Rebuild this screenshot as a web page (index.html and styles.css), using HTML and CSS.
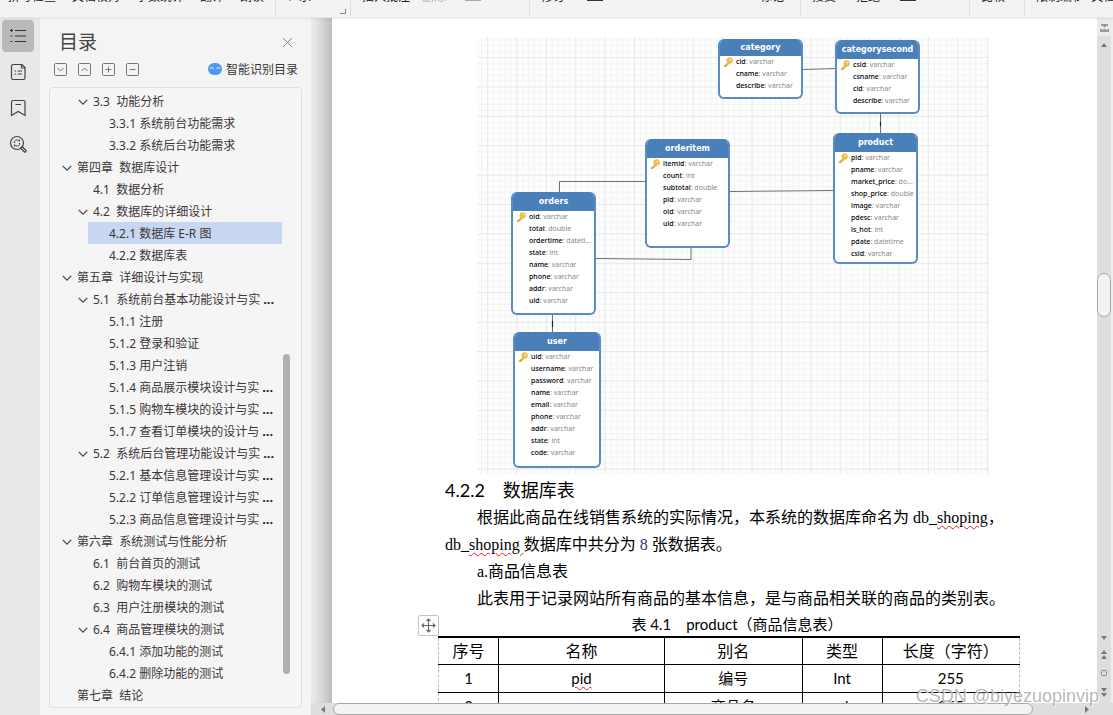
FILE: index.html
```html
<!DOCTYPE html>
<html lang="zh-CN">
<head>
<meta charset="utf-8">
<title>数据库设计</title>
<link rel="stylesheet" href="styles.css">
</head>
<body>
<svg class="defs" aria-hidden="true">
  <symbol id="chev" viewBox="0 0 10 10"><path d="M.7 2.8 5 7.2l4.300-4.400" fill="none" stroke="#444" stroke-width="1.200"/></symbol>
  <symbol id="key" viewBox="0 0 10 10"><path d="M5 5.500 1 8.800v1.100h2l.3-1 1-.2.300-1 1.800-1z" fill="#e6b23c" stroke="#cf9a33" stroke-width=".4"/><circle cx="6.700" cy="3.400" r="2.900" fill="#f5c445" stroke="#dca339" stroke-width=".5"/><circle cx="7.700" cy="2.400" r=".7" fill="#fff"/></symbol>
</svg>
<header class="ribbon">
  <div class="group g1"><span>拼写检查</span><span>文档校对</span><span>字数统计</span><span>翻译</span><span>朗读</span></div>
  <div class="group g2"><b class="blue">ノ</b><span>氷</span></div>
  <svg class="launcher" viewBox="0 0 6 6"><path d="M0 5.500h5.500V1" fill="none" stroke="#888"/></svg>
  <div class="group g3"><span>插入批注</span><span class="dim">删除</span><i class="bar pale"></i></div>
  <div class="group g4"><span>修订</span><i class="bar"></i><span class="end">标记</span></div>
  <div class="group g5"><span>接受</span><span>拒绝</span><i class="bar"></i></div>
  <div class="group g6"><span>比较</span></div>
  <div class="group g7"><span>限制编辑</span><span>文档</span></div>
</header>
<div class="work">
  <nav class="rail" aria-label="导航">
    <button class="on" aria-label="目录"><svg viewBox="0 0 18 18"><path d="M1 3.500h3M2.500 2v3M6 3.500h11M1.500 9h2M6 9h11M1.500 14.500h2M6 14.500h11" fill="none" stroke="#333" stroke-width="1.200"/></svg></button>
    <button aria-label="章节"><svg viewBox="0 0 18 18"><path d="M4 1.500h9l3 3v10.500a1.500 1.500 0 0 1-1.500 1.500h-10.500a1.500 1.500 0 0 1-1.500-1.500v-12A1.500 1.500 0 0 1 4 1.500zM12.500 1.500v3.500H16M5.500 8h1.500M8.500 8h4.500M5.500 11h1.500M8.500 11h4.500" fill="none" stroke="#444" stroke-width="1.200"/></svg></button>
    <button aria-label="书签"><svg viewBox="0 0 18 18"><path d="M4 1.500h10.500a1.500 1.500 0 0 1 1.500 1.500v13.500l-6.800-4-6.700 4V3A1.500 1.500 0 0 1 4 1.500zM6.500 5.500h5.500" fill="none" stroke="#444" stroke-width="1.200"/></svg></button>
    <button aria-label="查找"><svg viewBox="0 0 18 18"><circle cx="8" cy="8" r="6.500" fill="none" stroke="#444" stroke-width="1.200"/><path d="M5 7.500C5.500 4.500 9 4.300 10.500 6.300V4.500M11 8.500C10.500 11.500 7 11.700 5.500 9.700v1.800M5 7.500h1M10 8.500h1" fill="none" stroke="#444"/><path d="m13 13 3 3" stroke="#444" stroke-width="3.200" stroke-linecap="round"/><path d="m13.300 13.300 2.700 2.700" stroke="#eee" stroke-width="1" stroke-linecap="round"/></svg></button>
  </nav>
  <aside class="side">
    <div class="side-head"><h2>目录</h2><button aria-label="关闭"><svg viewBox="0 0 11 11"><path d="m1 1 9 9M10 1l-9 9" stroke="#777" stroke-width=".9"/></svg></button></div>
    <div class="side-tools">
      <button aria-label="展开"><svg viewBox="0 0 13 13"><rect x=".5" y=".5" width="12" height="12" rx="1"/><path d="m3.500 5 3 3 3-3"/></svg></button>
      <button aria-label="收起"><svg viewBox="0 0 13 13"><rect x=".5" y=".5" width="12" height="12" rx="1"/><path d="m3.500 8 3-3 3 3"/></svg></button>
      <button aria-label="增加"><svg viewBox="0 0 13 13"><rect x=".5" y=".5" width="12" height="12" rx="1"/><path d="M3.500 6.500h6M6.500 3.500v6"/></svg></button>
      <button aria-label="减少"><svg viewBox="0 0 13 13"><rect x=".5" y=".5" width="12" height="12" rx="1"/><path d="M3.500 6.500h6"/></svg></button>
      <button class="smart"><svg viewBox="0 0 14 12"><rect width="14" height="12" rx="6" fill="#4c98f2"/><path d="M2 5.500q1.500-2 3.500 0M8.500 5.500q2-2 3.500 0" fill="none" stroke="#fff" stroke-width="1"/></svg>智能识别目录</button>
    </div>
    <div class="tree">
      <div class="rows">
        <a href="#" class="l2"><svg><use href="#chev"/></svg>3.3  功能分析</a>
        <a href="#" class="l3">3.3.1 系统前台功能需求</a>
        <a href="#" class="l3">3.3.2 系统后台功能需求</a>
        <a href="#" class="l1"><svg><use href="#chev"/></svg>第四章  数据库设计</a>
        <a href="#" class="l2">4.1  数据分析</a>
        <a href="#" class="l2"><svg><use href="#chev"/></svg>4.2  数据库的详细设计</a>
        <a href="#" class="l3 sel">4.2.1 数据库 E-R 图</a>
        <a href="#" class="l3">4.2.2 数据库表</a>
        <a href="#" class="l1"><svg><use href="#chev"/></svg>第五章  详细设计与实现</a>
        <a href="#" class="l2"><svg><use href="#chev"/></svg>5.1  系统前台基本功能设计与实<b>...</b></a>
        <a href="#" class="l3">5.1.1 注册</a>
        <a href="#" class="l3">5.1.2 登录和验证</a>
        <a href="#" class="l3">5.1.3 用户注销</a>
        <a href="#" class="l3">5.1.4 商品展示模块设计与实<b>...</b></a>
        <a href="#" class="l3">5.1.5 购物车模块的设计与实<b>...</b></a>
        <a href="#" class="l3">5.1.7 查看订单模块的设计与<b>...</b></a>
        <a href="#" class="l2"><svg><use href="#chev"/></svg>5.2  系统后台管理功能设计与实<b>...</b></a>
        <a href="#" class="l3">5.2.1 基本信息管理设计与实<b>...</b></a>
        <a href="#" class="l3">5.2.2 订单信息管理设计与实<b>...</b></a>
        <a href="#" class="l3">5.2.3 商品信息管理设计与实<b>...</b></a>
        <a href="#" class="l1"><svg><use href="#chev"/></svg>第六章  系统测试与性能分析</a>
        <a href="#" class="l2">6.1  前台首页的测试</a>
        <a href="#" class="l2">6.2  购物车模块的测试</a>
        <a href="#" class="l2">6.3  用户注册模块的测试</a>
        <a href="#" class="l2"><svg><use href="#chev"/></svg>6.4  商品管理模块的测试</a>
        <a href="#" class="l3">6.4.1 添加功能的测试</a>
        <a href="#" class="l3">6.4.2 删除功能的测试</a>
        <a href="#" class="l1">第七章  结论</a>
      </div>
      <div class="tree-bar"><i></i></div>
    </div>
  </aside>
  <div class="view">
    <div class="gutter"></div>
    <main class="page">
      <figure class="er">
        <svg class="wires" viewBox="0 0 512 437" preserveAspectRatio="none">
          <defs>
            <pattern id="minor" x="10" y="20" width="5.880" height="5.880" patternUnits="userSpaceOnUse"><path d="M.5 0v6M0 .5h6" stroke="#f4f4f5" fill="none"/></pattern>
            <pattern id="major" x="10" y="20" width="29.400" height="29.400" patternUnits="userSpaceOnUse"><path d="M.5 0v30M0 .5h30" stroke="#e8e9ea" fill="none"/></pattern>
          </defs>
          <rect width="512" height="437" fill="#fdfdfd"/>
          <rect width="512" height="437" fill="url(#minor)"/>
          <rect width="512" height="437" fill="url(#major)"/>
          <path d="M325 32.500l34-1M403.500 75v22M252 154.500l105-1M169 144.500H82.500V156M118 221.500l96 1V210M75.500 277v19" fill="none" stroke="#6b7075"/>
          <path d="M403.500 85v4M75.500 284v6" stroke="#222" stroke-width="1.200"/>
        </svg>
        <section class="node category"><h3>category</h3><p><svg><use href="#key"/></svg><b>cid</b>: varchar</p><p><b>cname</b>: varchar</p><p><b>describe</b>: varchar</p></section>
        <section class="node second"><h3>categorysecond</h3><p><svg><use href="#key"/></svg><b>csid</b>: varchar</p><p><b>csname</b>: varchar</p><p><b>cid</b>: varchar</p><p><b>describe</b>: varchar</p></section>
        <section class="node product"><h3>product</h3><p><svg><use href="#key"/></svg><b>pid</b>: varchar</p><p><b>pname</b>: varchar</p><p><b>market_price</b>: do...</p><p><b>shop_price</b>: double</p><p><b>image</b>: varchar</p><p><b>pdesc</b>: varchar</p><p><b>is_hot</b>: int</p><p><b>pdate</b>: datetime</p><p><b>csid</b>: varchar</p></section>
        <section class="node orderitem"><h3>orderitem</h3><p><svg><use href="#key"/></svg><b>itemid</b>: varchar</p><p><b>count</b>: int</p><p><b>subtotal</b>: double</p><p><b>pid</b>: varchar</p><p><b>oid</b>: varchar</p><p><b>uid</b>: varchar</p></section>
        <section class="node orders"><h3>orders</h3><p><svg><use href="#key"/></svg><b>oid</b>: varchar</p><p><b>total</b>: double</p><p><b>ordertime</b>: dateti...</p><p><b>state</b>: int</p><p><b>name</b>: varchar</p><p><b>phone</b>: varchar</p><p><b>addr</b>: varchar</p><p><b>uid</b>: varchar</p></section>
        <section class="node user"><h3>user</h3><p><svg><use href="#key"/></svg><b>uid</b>: varchar</p><p><b>username</b>: varchar</p><p><b>password</b>: varchar</p><p><b>name</b>: varchar</p><p><b>email</b>: varchar</p><p><b>phone</b>: varchar</p><p><b>addr</b>: varchar</p><p><b>state</b>: int</p><p><b>code</b>: varchar</p></section>
      </figure>
      <h1>4.2.2　数据库表</h1>
      <p class="text">根据此商品在线销售系统的实际情况，本系统的数据库命名为 db_<u>shoping</u>，<br>db_<u>shoping </u>数据库中共分为 <span class="num">8</span> 张数据表。</p>
      <p class="text">a.商品信息表</p>
      <p class="text">此表用于记录网站所有商品的基本信息，是与商品相关联的商品的类别表。</p>
      <div class="table-wrap">
        <button class="move" aria-label="移动表格"><svg viewBox="0 0 15 15"><path d="M7.500 1v13M1 7.500h13M5.500 3l2-2 2 2M5.500 12l2 2 2-2M3 5.500l-2 2 2 2M12 5.500l2 2-2 2" fill="none" stroke="#666" stroke-width="1.100"/></svg></button>
        <table>
          <caption>表 4.1　product（商品信息表）</caption>
          <colgroup><col class="c1"><col class="c2"><col><col class="c4"><col></colgroup>
          <thead><tr><th>序号</th><th>名称</th><th>别名</th><th>类型</th><th>长度（字符）</th></tr></thead>
          <tbody>
            <tr><td>1</td><td><u>pid</u></td><td>编号</td><td>Int</td><td>255</td></tr>
            <tr><td>2</td><td>pname</td><td>商品名</td><td>varchar</td><td>255</td></tr>
          </tbody>
        </table>
      </div>
    </main>
    <div class="vbar">
      <svg class="split" viewBox="0 0 14 18"><path d="M4 6h7v2H9L7.500 10 6 8H4zM3 11h2v1h1v-1h3v1h1v-1h2v3H3z" fill="#999"/></svg>
      <svg class="up" viewBox="0 0 14 18"><path d="M4 11 7 7l3 4z" fill="#777"/></svg>
      <i class="vthumb"></i>
      <svg class="pager" viewBox="0 0 14 72"><path d="M4 5h6L7 9zM4 23l3-4 3 4zM4 28l3-4 3 4zM4 57h6l-3 4zM4 62h6l-3 4z" fill="#777"/><rect x="4.500" y="39.500" width="5" height="5" rx="1" fill="none" stroke="#888"/></svg>
    </div>
    <div class="hbar"><svg viewBox="0 0 20 12"><path d="M8 6.500 12 3v7z" fill="#777"/></svg><i></i><svg viewBox="0 0 20 12"><path d="M12 6.500 8 3v7z" fill="#777"/></svg></div>
  </div>
</div>
<div class="mark">CSDN @biyezuopinvip</div>
</body>
</html>
```
FILE: styles.css
```css
* { box-sizing: border-box; }
body {
  margin: 0;
  height: 100vh;
  display: flex;
  flex-direction: column;
  overflow: hidden;
  position: relative;
  background: #f3f3f3;
  font: 12px "Noto Sans", "Noto Sans CJK SC", sans-serif;
  color: #403535;
}
button { border: 0; padding: 0; background: none; font: inherit; color: inherit; }
h1, h2, h3, p, figure { margin: 0; }
svg { display: block; flex: none; }
.defs { position: absolute; width: 0; height: 0; }

/* ribbon */
.ribbon {
  flex: none;
  height: 18px;
  display: flex;
  background: #f3f3f3;
  border-bottom: 1px solid #e6e6e6;
  box-shadow: 0 1px 3px #0001;
  position: relative;
  z-index: 2;
}
.group {
  height: 16px;
  padding-left: 11px;
  display: flex;
  gap: 20px;
  border-left: 1px solid #dedede;
  line-height: 10px;
  color: #222;
  white-space: nowrap;
}
.group > * { height: 2px; overflow: hidden; display: flex; align-items: flex-end; }
.g1 { width: 275px; padding-left: 8px; border: 0; gap: 16px; }
.g2 { width: 65px; gap: 0; }
.g3 { width: 179px; gap: 12px; }
.g4 { width: 271px; gap: 22px; }
.g5 { width: 169px; }
.g6 { width: 55px; }
.g7 { flex: 1; overflow: hidden; gap: 12px; }
.blue { color: #3b7fe0; }
.dim { color: #aaa; }
.launcher { width: 6px; height: 6px; margin: 8px 4px 0 0; }
.group .bar { width: 16px; height: 1px; background: #333; }
.group .pale { margin-left: 7px; background: #aaa; }
.group .end { margin-left: auto; margin-right: 16px; }

.work { flex: 1; min-height: 0; display: flex; }

/* icon rail */
.rail {
  flex: none;
  width: 40px;
  padding: 2px;
  display: flex;
  flex-direction: column;
  gap: 4px;
  background: #e8e8e8;
}
.rail button { width: 32px; height: 32px; display: grid; place-items: center; border-radius: 4px; }
.rail svg { width: 18px; height: 18px; }
.rail .on { background: #b9b9b9; }

/* contents panel */
.side {
  flex: none;
  width: 271px;
  padding: 10px 9px 7px;
  display: flex;
  flex-direction: column;
  background: #f4f4f4;
}
.side-head {
  height: 28px;
  padding: 0 9px 0 10px;
  display: flex;
  align-items: center;
  justify-content: space-between;
}
.side-head h2 { font-size: 19px; font-weight: 400; line-height: 28px; color: #444; }
.side-head svg { width: 11px; height: 11px; }
.side-tools { height: 26px; padding: 0 4px 0 5px; display: flex; align-items: center; gap: 11px; }
.side-tools svg { width: 13px; height: 13px; fill: none; stroke: #777; }
.side-tools .smart { margin-left: auto; display: flex; align-items: center; gap: 4px; }
.side-tools .smart svg { width: 14px; height: 12px; stroke: none; }
.tree {
  flex: 1;
  min-height: 0;
  margin-top: 5px;
  padding-top: 2px;
  display: flex;
  overflow: hidden;
  border: 1px solid #dfdfdf;
  border-radius: 4px;
  background: #f5f5f5;
}
.rows { flex: 1; min-width: 0; }
.rows a {
  height: 22px;
  padding-left: 21px;
  display: flex;
  align-items: center;
  color: inherit;
  text-decoration: none;
  white-space: pre;
}
.rows svg { width: 10px; height: 10px; margin: 2px 5px 0 -15px; }
.rows b { padding-left: 3px; font-size: 13px; color: #222; }
.rows .l1 { margin-left: 6px; }
.rows .l2 { margin-left: 22px; }
.rows .l3 { margin-left: 38px; }
.rows .sel { background: #c7d7f1; }
.tree-bar { flex: none; width: 19px; padding: 264px 0 0 1px; }
.tree-bar i { display: block; width: 7px; height: 320px; border-radius: 4px; background: #b0b0b2; }

/* document */
.view {
  flex: 1;
  min-width: 0;
  display: grid;
  grid-template-columns: 21px minmax(0, 1fr) 16px;
  grid-template-rows: minmax(0, 1fr) 12px;
}
.gutter { background: linear-gradient(90deg, #e8e8e8 15%, #d6d6d6 50%, #bdbdbd); }
.page {
  padding: 19px 77px 0 106px;
  overflow: hidden;
  background: #fff;
  color: #000;
  font-family: "Liberation Serif", "Noto Sans CJK SC", serif;
}
.er { position: relative; width: 512px; height: 437px; margin: 0 0 3px 39px; }
.wires { width: 100%; height: 100%; }
.node {
  position: absolute;
  width: 85px;
  overflow: hidden;
  border: 2px solid #5b8ac8;
  border-top: 0;
  border-radius: 6px;
  background: #fff;
  font: 7px/12px "Noto Sans", sans-serif;
  color: #888;
}
.node h3 {
  height: 19px;
  background: #4a80b9;
  color: #fff;
  font: bold 8px/19px "DejaVu Sans", sans-serif;
  text-align: center;
}
.node p { padding-left: 16px; position: relative; white-space: nowrap; }
.node p b { font-weight: 500; color: #000; }
.node p svg { position: absolute; left: 3px; top: 1px; width: 10px; height: 10px; }
.category { left: 241px; top: 2px; height: 60px; }
.category h3 { height: 17px; line-height: 17px; }
.second { left: 358px; top: 3px; height: 74px; }
.product { left: 356px; top: 96px; height: 131px; }
.orderitem { left: 168px; top: 102px; height: 109px; }
.orders { left: 34px; top: 155px; height: 123px; }
.user { left: 36px; top: 295px; width: 88px; height: 136px; }

.page h1 { padding-left: 7px; font: 18px/27px Lato, "Noto Sans CJK SC", sans-serif; }
.text { padding-left: 7px; font-size: 16px; line-height: 27px; text-indent: 32px; white-space: nowrap; }
.num { color: #1f3864; }
.page u { text-decoration: underline wavy #e02020 1px; text-underline-offset: 2px; }
.table-wrap { position: relative; }
.move {
  position: absolute;
  left: -20px;
  top: 3px;
  width: 21px;
  height: 21px;
  display: grid;
  place-items: center;
  border: 1px solid #c4c4c4;
  border-radius: 2px;
  background: #fff;
}
.move svg { width: 15px; height: 15px; }
table {
  width: 100%;
  table-layout: fixed;
  border-collapse: collapse;
  font: 15px/25px Lato, "Noto Sans CJK SC", sans-serif;
}
caption { line-height: 24px; padding-left: 16px; }
th, td { height: 28px; padding: 0; border: 1px solid #000; text-align: center; }
th { height: 27px; font-weight: 400; font-size: 16px; border-top: 2px solid #000; }
th:first-child, td:first-child { border-left: 1px dashed #bbb; }
th:last-child, td:last-child { border-right: 1px dashed #bbb; }
.c1 { width: 60px; }
.c2 { width: 166px; }
.c4 { width: 80px; }

/* scroll bars */
.vbar {
  display: flex;
  flex-direction: column;
  background: #dedede;
  border-right: 2px solid #eee;
}
.vbar svg { width: 14px; height: 18px; }
.vbar .split { background: #ebebeb; }
.vthumb {
  width: 14px;
  height: 44px;
  margin-top: 219px;
  border: 1px solid #a8a8a8;
  border-radius: 7px;
  background: #f3f3f3;
}
.vbar .pager { height: 72px; margin-top: auto; }
.hbar {
  grid-column: 1 / -1;
  padding: 0 16px 0 2px;
  display: flex;
  background: #dedede;
}
.hbar svg { width: 20px; height: 12px; }
.hbar i {
  flex: 1;
  margin-right: 44px;
  border: 1px solid #a8a8a8;
  border-radius: 6px;
  background: #f3f3f3;
}

.mark {
  position: absolute;
  right: 14px;
  bottom: 8px;
  z-index: 3;
  font: 18px/22px "Liberation Sans", sans-serif;
  color: #8889;
  text-shadow: 1px 1px 1px #fff;
}
```
